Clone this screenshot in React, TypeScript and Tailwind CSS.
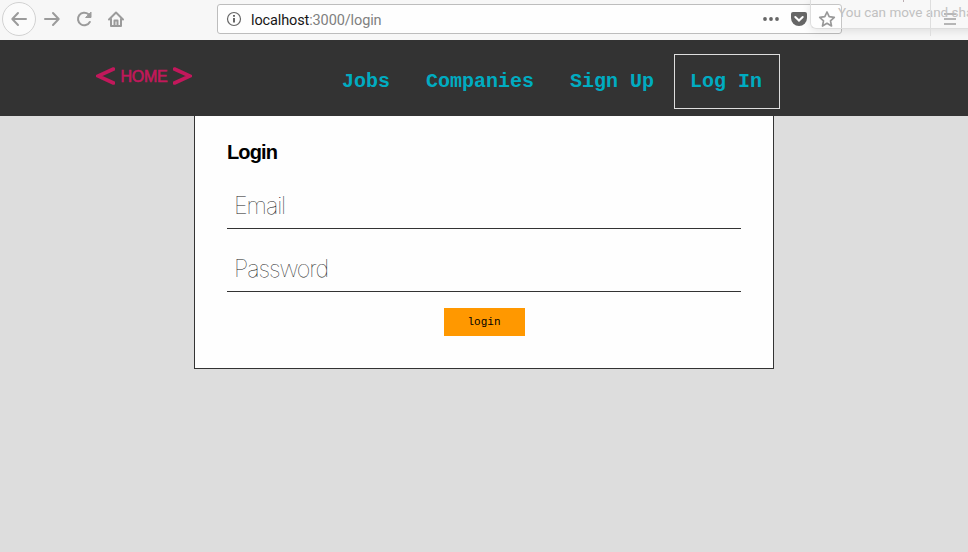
import type { ReactNode } from "react";

function Icon({ children, className = "" }: { children: ReactNode; className?: string }) {
  return (
    <svg viewBox="0 0 18 18" className={`size-[18px] shrink-0 ${className}`} fill="none" stroke="#9b9b9b" strokeWidth="2" strokeLinecap="round" strokeLinejoin="round">
      {children}
    </svg>
  );
}

function BrowserBar() {
  return (
    <div className="relative flex h-10 items-start overflow-hidden bg-[#f7f7f7] pl-0.5">
      <div className="mt-0.5 flex size-[34px] shrink-0 items-center justify-center rounded-full border border-[#d2d2d2] bg-[#fbfbfb]">
        <Icon><path d="M16 9H2.500M8 3L2.300 9L8 15" /></Icon>
      </div>
      <Icon className="mt-2.5 ml-[7px]"><path d="M2 9h13.500M10 3L15.700 9L10 15" /></Icon>
      <Icon className="mt-2.5 ml-[14px]">
        <path d="M14.800 12A6.300 6.300 0 1 1 13.500 4.300L15 6" />
        <path d="M16 2.500V7.500H11Z" fill="#9b9b9b" strokeWidth="1" />
      </Icon>
      <Icon className="mt-2.5 ml-[14px]">
        <path d="M2 9.500L9 2.500L16 9.500M4 9V16H14V9" />
        <path d="M7.500 15.500V10.500H10.500V15.500" />
      </Icon>
      <div className="mt-1 ml-[92px] flex h-[30px] w-[625px] shrink-0 items-center rounded-[3px] border border-[#bdbdbd] bg-[#fefefe]">
        <svg viewBox="0 0 16 16" className="ml-2 size-4 shrink-0" fill="none" stroke="#666" strokeWidth="1.200">
          <circle cx="8" cy="8" r="6.500" />
          <path d="M8 7V11.500M8 4V5.800" strokeWidth="2" />
        </svg>
        <div className="ml-[9px] pt-[3px] font-['Roboto',sans-serif] text-[14.500px] leading-5 tracking-[-0.120px] text-[#808080]">
          <span className="text-[#161616]">localhost</span>:3000/login
        </div>
        <svg viewBox="0 0 18 18" className="ml-auto size-[18px] shrink-0" fill="#666">
          <circle cx="3" cy="9" r="1.900" /><circle cx="9" cy="9" r="1.900" /><circle cx="15" cy="9" r="1.900" />
        </svg>
        <svg viewBox="0 0 16 14" className="ml-[11px] h-3.5 w-4 shrink-0" fill="#666">
          <path d="M2 0H14Q16 0 16 2V6A8 8 0 0 1 0 6V2Q0 0 2 0Z" />
          <path d="M4.300 5L8 8.500L11.700 5" fill="none" stroke="white" strokeWidth="2" strokeLinecap="round" />
        </svg>
        <svg viewBox="0 0 18 18" className="mr-[5px] ml-[11px] size-[18px] shrink-0" fill="none" stroke="#888" strokeWidth="1.700" strokeLinejoin="round">
          <path d="M9 2L11.200 6.700L16.300 7.300L12.500 10.800L13.500 16L9 13.300L4.500 16L5.500 10.800L1.700 7.300L6.800 6.700Z" />
        </svg>
      </div>
      <svg viewBox="0 0 12 12" className="mt-[13px] ml-[102px] h-3 w-3 shrink-0" stroke="#aaa" strokeWidth="2">
        <path d="M0 1H12M0 6H12M0 11H12" />
      </svg>
      <div className="absolute top-0 left-[810px] h-[29px] w-[170px] rounded-bl-md border-b border-l border-[#dedede] bg-white/15 shadow-[0_2px_8px_rgba(0,0,0,0.100)]">
        <div className="ml-[27px] pt-[3px] font-['Roboto',sans-serif] text-[13.500px] leading-[18px] whitespace-nowrap text-[#c1c1c1]">You can move and sha</div>
        <div className="absolute top-0 left-[92px] h-0.5 w-px bg-[#bcaeb2]" />
      </div>
      <div className="absolute top-0 left-[930px] h-9 w-px bg-[#dedede]" />
    </div>
  );
}

function NavLink({ label, active = false }: { label: string; active?: boolean }) {
  return (
    <a className={`flex h-[55px] items-center border pl-[15px] whitespace-pre ${active ? "border-[#dedede] pr-[17px]" : "border-transparent pr-[15px]"}`}>
      {label}
    </a>
  );
}

function Field({ label, type, className = "" }: { label: string; type: string; className?: string }) {
  return (
    <input
      type={type}
      placeholder={label}
      aria-label={label}
      className={`block h-[47px] w-full border-b border-[#333] bg-transparent px-[7px] pt-px font-['Inter',sans-serif] text-[23.500px] font-thin tracking-[-1.100px] outline-none placeholder:text-[#222] ${className}`}
    />
  );
}

export default function App() {
  return (
    <div className="h-[552px] w-[968px] overflow-hidden bg-[#ddd]">
      <BrowserBar />
      <header className="flex h-[76px] items-start bg-[#333] pt-[14px] pl-24">
        <a className="mt-3 flex w-24 items-center justify-between text-[#c2185b]">
          <svg viewBox="0 0 19 18" className="h-[18px] w-[19px]" fill="none" stroke="currentColor" strokeWidth="3.600" strokeLinecap="round"><path d="M17.500 2L2 9L17.500 16" /></svg>
          <span className="pt-[3px] font-['Liberation_Sans',sans-serif] text-[16px] leading-4 tracking-[-0.200px] [-webkit-text-stroke:0.600px_#c2185b]">HOME</span>
          <svg viewBox="0 0 19 18" className="h-[18px] w-[19px]" fill="none" stroke="currentColor" strokeWidth="3.600" strokeLinecap="round"><path d="M1.500 2L17 9L1.500 16" /></svg>
        </a>
        <nav className="ml-[134px] flex gap-1 font-['Courier_New','Liberation_Mono',monospace] text-[20px] font-bold text-[#00acc1]">
          <NavLink label="Jobs" />
          <NavLink label="Companies" />
          <NavLink label="Sign Up" />
          <NavLink label="Log In" active />
        </nav>
      </header>
      <main className="mx-auto h-[253px] w-[580px] border-x border-b border-[#333] bg-[#fefefe] px-8 pt-6">
        <h1 className="font-['Liberation_Sans',sans-serif] text-[20px] leading-6 font-bold tracking-[-0.850px] text-black">Login</h1>
        <Field label="Email" type="email" className="mt-[18px]" />
        <Field label="Password" type="password" className="mt-4" />
        <button className="mx-auto mt-4 block h-7 w-[81px] bg-[#ff9800] font-['Courier_New','Liberation_Mono',monospace] text-[11px] text-black">login</button>
      </main>
    </div>
  );
}
